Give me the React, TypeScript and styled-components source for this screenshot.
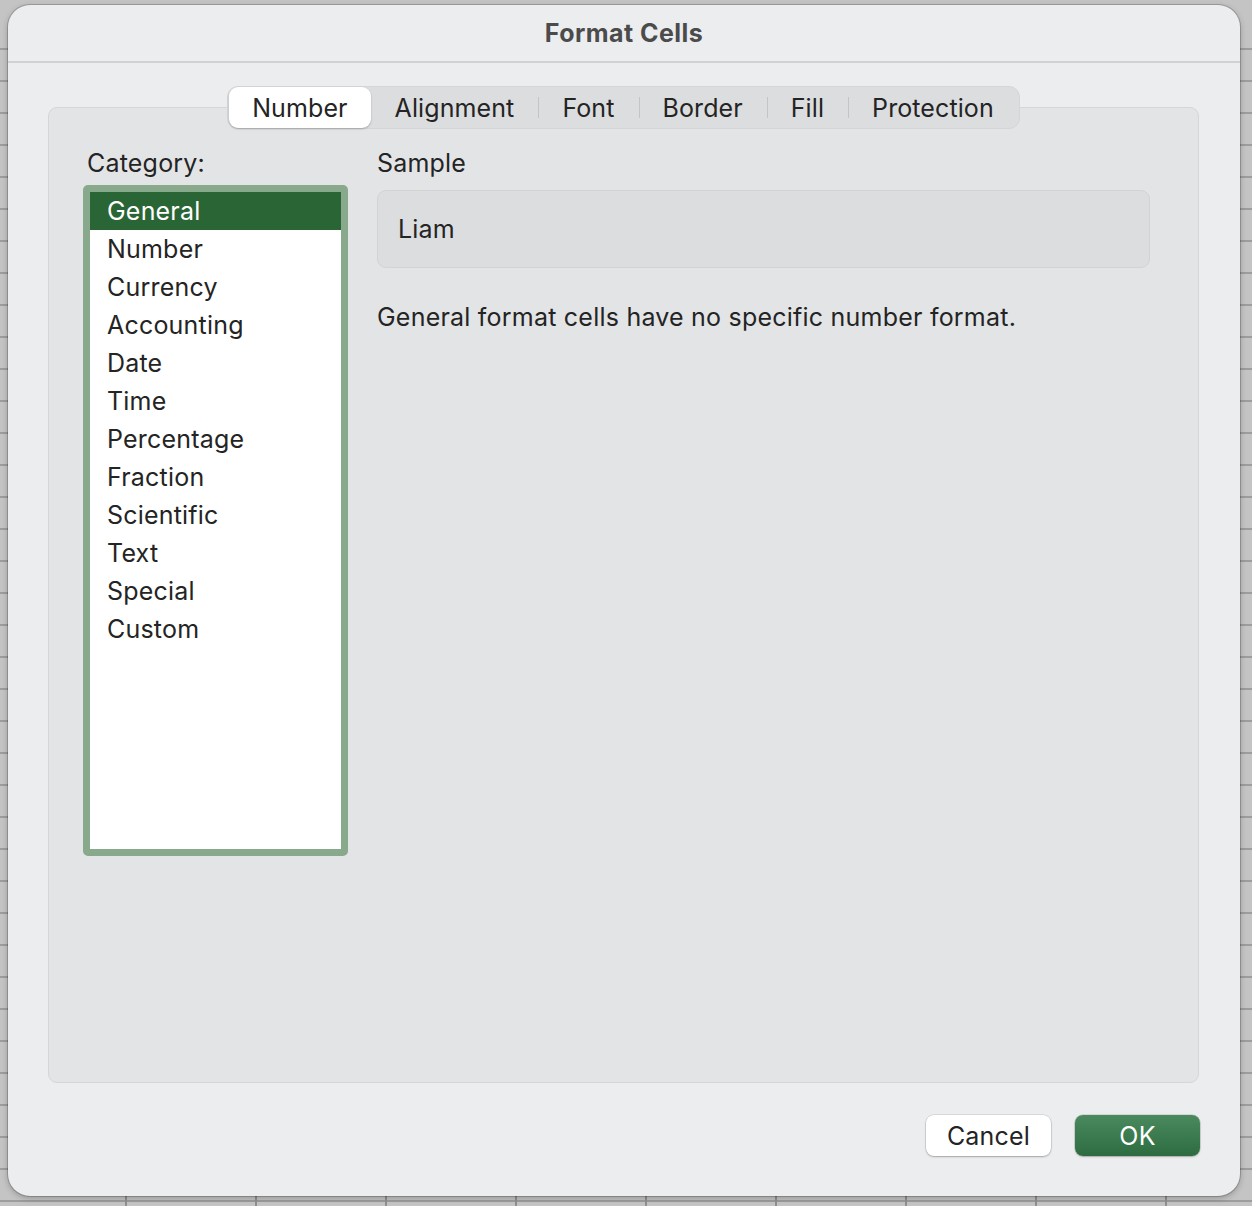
import React, { useState } from "react";
import styled, { createGlobalStyle } from "styled-components";

const GlobalStyle = createGlobalStyle`
  html, body {
    margin: 0;
    padding: 0;
  }
  body {
    width: 1252px;
    height: 1206px;
    overflow: hidden;
    font-family: Inter, "Liberation Sans", sans-serif;
    background-color: #c4c4c4;
    background-image:
      repeating-linear-gradient(to right, transparent 0 128px, #8f8f8f 128px 130px),
      repeating-linear-gradient(to bottom, transparent 0 30px, #9d9d9d 30px 32px);
    background-size: 100% 20px, 100% 100%;
    background-position: -3px 1192px, 0 18px;
    background-repeat: no-repeat, repeat;
  }
`;

const Backdrop = styled.div`
  padding: 5px 12px 10px 8px;
`;

const Dialog = styled.div`
  width: 1232px;
  height: 1191px;
  box-sizing: border-box;
  background: #ecedef;
  border-radius: 22px;
  box-shadow: 0 0 0 1px rgba(0, 0, 0, 0.18), 0 2px 6px rgba(0, 0, 0, 0.25);
  display: flex;
  flex-direction: column;
  overflow: hidden;
`;

const TitleBar = styled.div`
  height: 56px;
  flex: none;
  display: flex;
  align-items: center;
  justify-content: center;
  border-bottom: 2px solid #d1d2d4;
  font-size: 25px;
  font-weight: 700;
  color: #4b4b4b;
  letter-spacing: 0.45px;
`;

const Body = styled.div`
  flex: 1;
  display: flex;
  flex-direction: column;
  padding: 23px 41px 0 40px;
`;

const TabStrip = styled.div`
  align-self: center;
  position: relative;
  z-index: 1;
  margin-bottom: -22px;
  display: flex;
  align-items: center;
  height: 43px;
  box-sizing: border-box;
  padding: 1px;
  background: #dcdddf;
  border: 1px solid #d4d5d7;
  border-radius: 11px;
`;

const Tab = styled.div<{ $active?: boolean; $sep?: boolean }>`
  position: relative;
  height: 41px;
  display: flex;
  align-items: center;
  padding: 0 ${(p) => (p.$active ? "23px" : "24px")};
  font-size: 25px;
  letter-spacing: 0.1px;
  color: #242424;
  border-radius: 9px;
  background: ${(p) => (p.$active ? "#ffffff" : "transparent")};
  box-shadow: ${(p) => (p.$active ? "0 1px 2px rgba(0,0,0,0.25)" : "none")};
  &::before {
    content: "";
    display: ${(p) => (p.$sep ? "block" : "none")};
    position: absolute;
    left: 0;
    top: 10px;
    bottom: 10px;
    width: 1px;
    background: #c3c4c6;
  }
`;

const Panel = styled.div`
  height: 976px;
  box-sizing: border-box;
  background: #e3e4e6;
  border: 1px solid #d5d6d8;
  border-radius: 9px;
  padding: 38px 48px 0 34px;
  display: grid;
  grid-template-columns: 265px 1fr;
  column-gap: 29px;
  align-items: start;
`;

const Column = styled.div`
  display: flex;
  flex-direction: column;
`;

const Label = styled.div<{ $indent?: number }>`
  font-size: 25px;
  line-height: 34px;
  letter-spacing: 0.2px;
  color: #242424;
  padding-left: ${(p) => p.$indent ?? 0}px;
`;

const ListBox = styled.div`
  margin-top: 5px;
  height: 671px;
  box-sizing: border-box;
  border: 7px solid #88a98b;
  border-radius: 5px;
  background: #ffffff;
`;

const ListItem = styled.div<{ $selected?: boolean }>`
  height: 38px;
  display: flex;
  align-items: center;
  padding-left: 17px;
  font-size: 25px;
  letter-spacing: 0.2px;
  color: ${(p) => (p.$selected ? "#ffffff" : "#242424")};
  background: ${(p) => (p.$selected ? "#2a6535" : "transparent")};
`;

const SampleBox = styled.div`
  margin-top: 10px;
  height: 78px;
  box-sizing: border-box;
  display: flex;
  align-items: center;
  padding-left: 20px;
  background: #dcdddf;
  border: 1px solid #d2d3d5;
  border-radius: 9px;
  font-size: 25px;
  letter-spacing: 0.2px;
  color: #242424;
`;

const Description = styled.div`
  margin-top: 32px;
  font-size: 25px;
  line-height: 34px;
  letter-spacing: 0.22px;
  color: #242424;
`;

const Footer = styled.div`
  display: flex;
  justify-content: flex-end;
  gap: 24px;
  padding: 32px 0 0 0;
  margin-right: -1px;
`;

const Button = styled.button<{ $primary?: boolean }>`
  width: 125px;
  height: 41px;
  border: none;
  border-radius: 8px;
  font-family: Inter, "Liberation Sans", sans-serif;
  font-size: 25px;
  letter-spacing: 0.2px;
  color: ${(p) => (p.$primary ? "#ffffff" : "#242424")};
  background: ${(p) =>
    p.$primary ? "linear-gradient(to bottom, #4a8a5e, #2e6b41)" : "#ffffff"};
  box-shadow: ${(p) =>
    p.$primary
      ? "0 0 0 0.5px rgba(0,0,0,0.2), 0 1px 2px rgba(0,0,0,0.2)"
      : "0 0 0 0.5px rgba(0,0,0,0.15), 0 1px 2px rgba(0,0,0,0.25)"};
  cursor: pointer;
`;

const tabs = ["Number", "Alignment", "Font", "Border", "Fill", "Protection"];
const categories = [
  "General",
  "Number",
  "Currency",
  "Accounting",
  "Date",
  "Time",
  "Percentage",
  "Fraction",
  "Scientific",
  "Text",
  "Special",
  "Custom",
];

export default function App() {
  const [activeTab, setActiveTab] = useState(0);
  const [category, setCategory] = useState(0);

  return (
    <>
      <GlobalStyle />
      <Backdrop>
        <Dialog>
          <TitleBar>Format Cells</TitleBar>
          <Body>
            <TabStrip>
              {tabs.map((t, i) => (
                <Tab
                  key={t}
                  $active={i === activeTab}
                  $sep={i > 1 && i !== activeTab && i - 1 !== activeTab}
                  onClick={() => setActiveTab(i)}
                >
                  {t}
                </Tab>
              ))}
            </TabStrip>
            <Panel>
              <Column>
                <Label $indent={4}>Category:</Label>
                <ListBox>
                  {categories.map((c, i) => (
                    <ListItem
                      key={c}
                      $selected={i === category}
                      onClick={() => setCategory(i)}
                    >
                      {c}
                    </ListItem>
                  ))}
                </ListBox>
              </Column>
              <Column>
                <Label>Sample</Label>
                <SampleBox>Liam</SampleBox>
                <Description>
                  General format cells have no specific number format.
                </Description>
              </Column>
            </Panel>
            <Footer>
              <Button>Cancel</Button>
              <Button $primary>OK</Button>
            </Footer>
          </Body>
        </Dialog>
      </Backdrop>
    </>
  );
}
